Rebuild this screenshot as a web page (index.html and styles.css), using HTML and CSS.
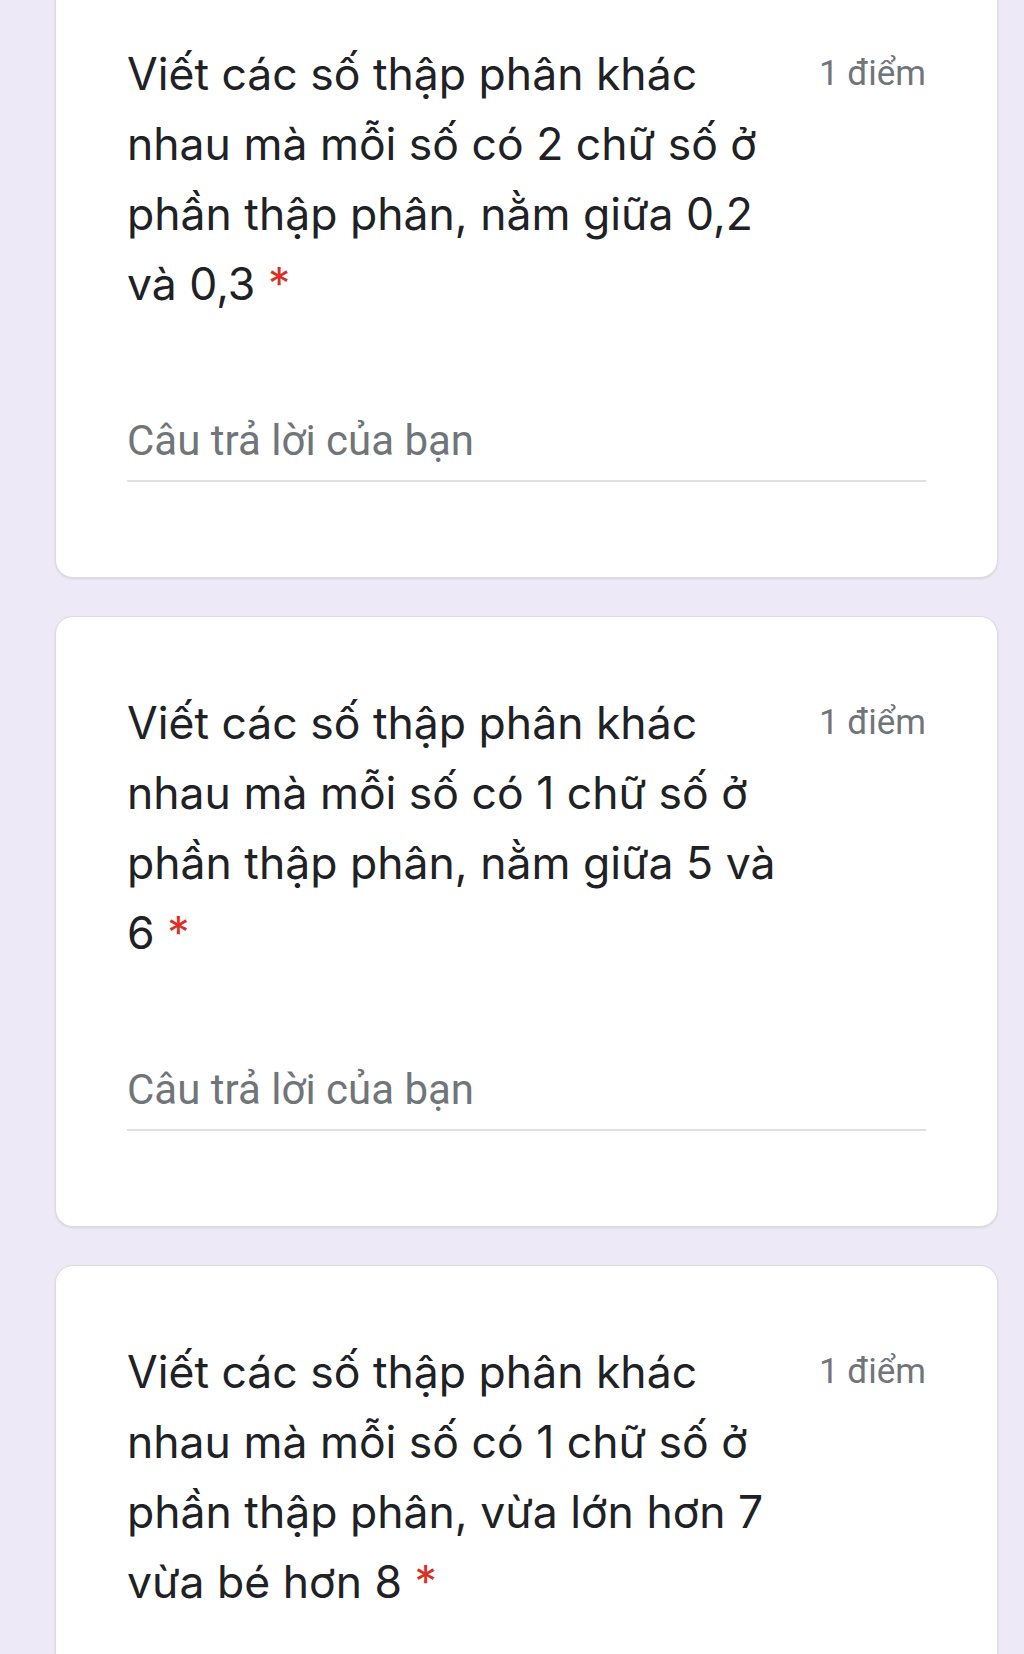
FILE: index.html
```html
<!DOCTYPE html>
<html lang="vi">
<head>
<meta charset="utf-8">
<title>Câu hỏi</title>
<link rel="stylesheet" href="styles.css">
</head>
<body>
<main class="form">
  <section class="card card-first">
    <div class="q-head">
      <div class="q-title">Viết các số thập phân khác nhau mà mỗi số có 2 chữ số ở phần thập phân, nằm giữa 0,2 và 0,3 <span class="req">*</span></div>
      <div class="q-points">1 điểm</div>
    </div>
    <div class="answer"><span class="placeholder">Câu trả lời của bạn</span></div>
  </section>
  <section class="card">
    <div class="q-head">
      <div class="q-title">Viết các số thập phân khác nhau mà mỗi số có 1 chữ số ở phần thập phân, nằm giữa 5 và 6 <span class="req">*</span></div>
      <div class="q-points">1 điểm</div>
    </div>
    <div class="answer"><span class="placeholder">Câu trả lời của bạn</span></div>
  </section>
  <section class="card">
    <div class="q-head">
      <div class="q-title">Viết các số thập phân khác nhau mà mỗi số có 1 chữ số ở phần thập phân, vừa lớn hơn 7 vừa bé hơn 8 <span class="req">*</span></div>
      <div class="q-points">1 điểm</div>
    </div>
    <div class="answer"><span class="placeholder">Câu trả lời của bạn</span></div>
  </section>
</main>
</body>
</html>
```
FILE: styles.css
```css
html, body {
  margin: 0;
  padding: 0;
}
body {
  background: #ede9f6;
  font-family: "Roboto", "Noto Sans", sans-serif;
  color: #202124;
  overflow: hidden;
}
.form {
  display: flex;
  flex-direction: column;
  gap: 38px;
  padding: 0 26px 0 55px;
  margin-top: -33px;
}
.card {
  background: #ffffff;
  border: 1px solid #dadce0;
  border-radius: 18px;
  box-shadow: 0 1px 2px rgba(60, 64, 67, 0.12);
  padding: 71px 71px 95px 71px;
}
.q-head {
  display: flex;
  align-items: flex-start;
}
.q-title {
  flex: 1;
  max-width: 664px;
  font-family: "Inter", "Roboto", sans-serif;
  font-size: 44.5px;
  line-height: 70px;
  color: #202124;
}
.req {
  color: #d93025;
}
.q-points {
  margin-left: auto;
  font-family: "Roboto", sans-serif;
  font-size: 35px;
  line-height: 70px;
  color: #70757a;
  white-space: nowrap;
}
.answer {
  margin-top: 97px;
  border-bottom: 2px solid #e0e0e0;
  padding-bottom: 14px;
}
.placeholder {
  display: block;
  font-family: "Roboto", sans-serif;
  font-size: 42px;
  line-height: 50px;
  color: #70757a;
}
```
